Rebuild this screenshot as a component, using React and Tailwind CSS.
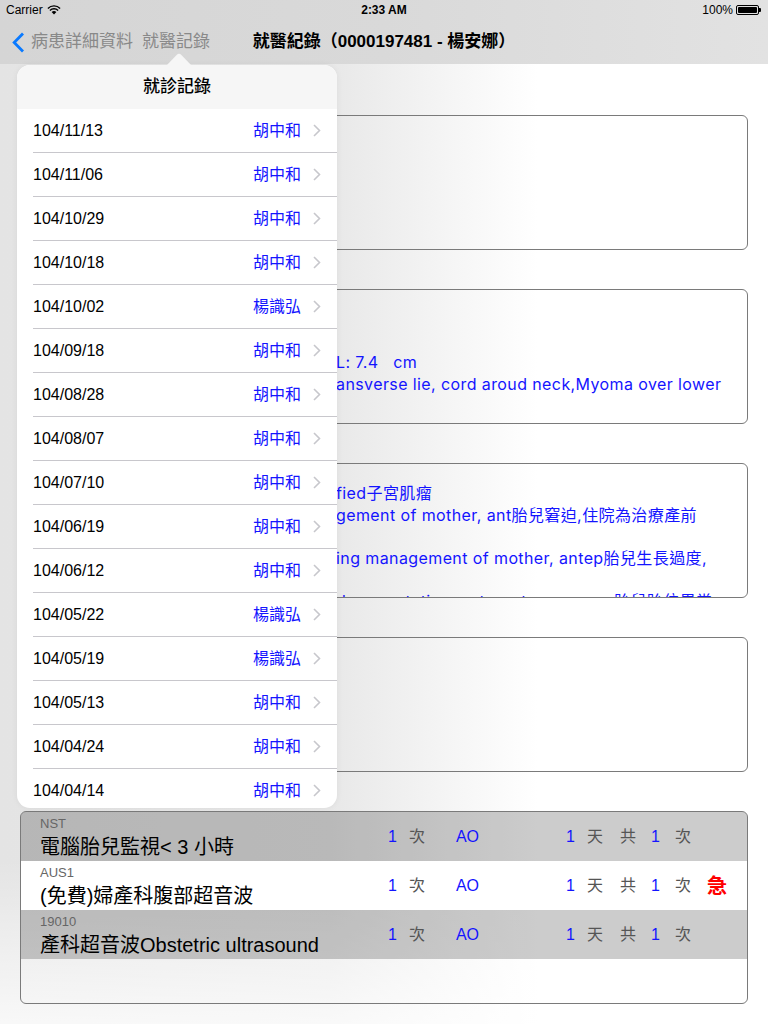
import React from 'react'

const visits = [
  ['104/11/13', '胡中和'],
  ['104/11/06', '胡中和'],
  ['104/10/29', '胡中和'],
  ['104/10/18', '胡中和'],
  ['104/10/02', '楊識弘'],
  ['104/09/18', '胡中和'],
  ['104/08/28', '胡中和'],
  ['104/08/07', '胡中和'],
  ['104/07/10', '胡中和'],
  ['104/06/19', '胡中和'],
  ['104/06/12', '胡中和'],
  ['104/05/22', '楊識弘'],
  ['104/05/19', '楊識弘'],
  ['104/05/13', '胡中和'],
  ['104/04/24', '胡中和'],
  ['104/04/14', '胡中和'],
]

const orders = [
  { code: 'NST', name: '電腦胎兒監視< 3 小時', gray: true },
  { code: 'AUS1', name: '(免費)婦產科腹部超音波', urgent: true },
  { code: '19010', name: '產科超音波Obstetric ultrasound', gray: true },
]

// hidden part sits under the popover, the rest shows on the right
function Line({ hidden = '', text = '' }) {
  return (
    <div className="flex whitespace-pre h-[21.6px] leading-[21.6px]">
      <span className="w-[307px] shrink-0 overflow-hidden">{hidden}</span>
      <span>{text}</span>
    </div>
  )
}

function Section({ label, children, h = 'h-[135px]' }) {
  return (
    <div>
      <div className="h-[39px] flex items-end pb-[8px] text-[15px] text-[#555]">{label}</div>
      <div className={`${h} rounded-[6px] border border-[#7a7a7a] overflow-hidden`}>{children}</div>
    </div>
  )
}

function Chevron() {
  return (
    <svg width="8" height="13" viewBox="0 0 8 13" className="ml-[12px] shrink-0">
      <path d="M1 1 L6.5 6.5 L1 12" fill="none" stroke="#c7c7cc" strokeWidth="1.6" />
    </svg>
  )
}

function Wifi() {
  return (
    <svg width="14" height="10" viewBox="0 0 14 10" className="ml-[4px]">
      <path d="M7 9.6 L4.6 7.1 A3.4 3.4 0 0 1 9.4 7.1 Z" fill="#000" />
      <path d="M2.9 5.4 A5.8 5.8 0 0 1 11.1 5.4" fill="none" stroke="#000" strokeWidth="1.4" />
      <path d="M0.9 3.4 A8.6 8.6 0 0 1 13.1 3.4" fill="none" stroke="#000" strokeWidth="1.4" />
    </svg>
  )
}

function Battery() {
  return (
    <div className="flex items-center ml-[3px]">
      <div className="w-[23px] h-[10px] border border-black rounded-[2px] p-[1px]">
        <div className="w-full h-full bg-black rounded-[1px]" />
      </div>
      <div className="w-[2px] h-[4px] bg-black rounded-r-[1px]" />
    </div>
  )
}

function Popover() {
  return (
    <div className="absolute left-[17px] top-[65px] w-[320px] h-[743px]">
      <svg width="26" height="13" viewBox="0 0 26 13" className="absolute left-[149px] top-[-12px]">
        <path d="M0 13 L10.6 2 Q13 -0.4 15.4 2 L26 13 Z" fill="#f6f6f6" />
      </svg>
      <div className="h-full rounded-[13px] overflow-hidden bg-white shadow-[0_0_6px_rgba(0,0,0,0.06)]">
        <div className="h-[44px] bg-[#f6f6f6] flex items-center justify-center text-[17px] font-medium text-black">
          就診記錄
        </div>
        {visits.map(([date, doc]) => (
          <div key={date} className="ml-[16px] h-[44px] flex items-center pr-[16px] border-b border-[#c8c7cc]">
            <span className="flex-1 text-[16px] text-black">{date}</span>
            <span className="text-[16px] text-[#1414ff]">{doc}</span>
            <Chevron />
          </div>
        ))}
      </div>
    </div>
  )
}

export default function App() {
  return (
    <div className="relative w-[768px] h-[1024px] overflow-hidden bg-[linear-gradient(to_bottom,rgba(255,255,255,0)_84%,rgba(255,255,255,0.75)_100%),linear-gradient(to_right,#e4e4e4_0%,#e8e8e8_43%,#ffffff_70%)] font-['Liberation_Sans','Noto_Sans_CJK_TC',sans-serif]">
      <header className="h-[64px] bg-[linear-gradient(to_right,#d5d5d5,#d9d9d9_50%,#e2e2e2)]">
        <div className="h-[20px] grid grid-cols-[1fr_auto_1fr] items-center px-[6px] text-[12px] text-black">
          <div className="flex items-center">
            Carrier
            <Wifi />
          </div>
          <div className="font-semibold">2:33 AM</div>
          <div className="flex items-center justify-end pr-[1px]">
            100%
            <Battery />
          </div>
        </div>
        <div className="h-[44px] grid grid-cols-[1fr_auto_1fr] items-center">
          <div className="flex items-center pl-[12px] text-[17px] text-[#898989]">
            <svg width="13" height="21" viewBox="0 0 13 21">
              <path d="M11 1.5 L2.2 10.5 L11 19.5" fill="none" stroke="#0a7aff" strokeWidth="2.8" />
            </svg>
            <span className="ml-[6px]">病患詳細資料</span>
            <span className="ml-[9px]">就醫記錄</span>
          </div>
          <div className="text-[17px] font-semibold text-black">就醫紀錄（0000197481 - 楊安娜）</div>
          <div />
        </div>
      </header>

      <main className="px-[20px] pt-[12px] text-[16px] text-[#1414ff]">
        <Section label="主訴">
          <div className="pt-[19px] pl-[8px] tracking-[0.4px] font-['Inter','Noto_Sans_CJK_TC',sans-serif]">
            <Line hidden="G2P1 36+2 wks 產檢" />
          </div>
        </Section>
        <Section label="檢查">
          <div className="pt-[19px] pl-[8px] tracking-[0.4px] font-['Inter','Noto_Sans_CJK_TC',sans-serif]">
            <Line hidden="Fetal: Single, GA 36 wks" />
            <Line hidden="BPD: 9.1 cm  AC: 32.4 cm" />
            <Line hidden="EFW: 3120 gm  HC: 33.2 cm  F" text="L: 7.4   cm" />
            <Line hidden="Impression: Singleton, tr" text="ansverse lie, cord aroud neck,Myoma over lower" />
            <Line hidden="segment" />
          </div>
        </Section>
        <Section label="診斷">
          <div className="pt-[19px] pl-[8px] tracking-[0.4px] font-['Inter','Noto_Sans_CJK_TC',sans-serif]">
            <Line hidden="O34.10 Uterine leiomyoma, unspeci" text="fied子宮肌瘤" />
            <Line hidden="O36.8 Other fetal problems affecting mana" text="gement of mother, ant胎兒窘迫,住院為治療產前" />
            <Line hidden="照護" />
            <Line hidden="O36.6 Excessive fetal growth affect" text="ing management of mother, antep胎兒生長過度," />
            <Line hidden="住院為治療產前照護" />
            <Line hidden="O32.9 Maternal care for malpresentation, unspecifie" text="d presentation, antepartum unspec胎兒胎位異常" />
          </div>
        </Section>
        <Section label="處置">
          <div className="pt-[19px] pl-[8px]">
            <Line hidden="定期產檢" />
          </div>
        </Section>
        <Section label="醫令" h="h-[193px]">
          {orders.map((o) => (
            <div key={o.code} className={`flex items-center h-[49px] ${o.gray ? 'bg-black/20' : 'bg-white'}`}>
              <div className="w-[367px] shrink-0 self-stretch pl-[19px] pt-[4px]">
                <div className="text-[13px] leading-[16px] text-[#666]">{o.code}</div>
                <div className="mt-[4px] text-[20px] leading-[22px] text-black whitespace-nowrap">{o.name}</div>
              </div>
              <span className="text-[#1414ff]">1</span>
              <span className="ml-[12px] text-[#555]">次</span>
              <span className="ml-[31px] text-[#1414ff]">AO</span>
              <span className="ml-[87px] text-[#1414ff]">1</span>
              <span className="ml-[12px] text-[#555]">天</span>
              <span className="ml-[17px] text-[#555]">共</span>
              <span className="ml-[15px] text-[#1414ff]">1</span>
              <span className="ml-[15px] text-[#555]">次</span>
              {o.urgent && <span className="ml-[16px] text-[20px] font-bold text-[#ff0000]">急</span>}
            </div>
          ))}
        </Section>
      </main>

      <Popover />
    </div>
  )
}
